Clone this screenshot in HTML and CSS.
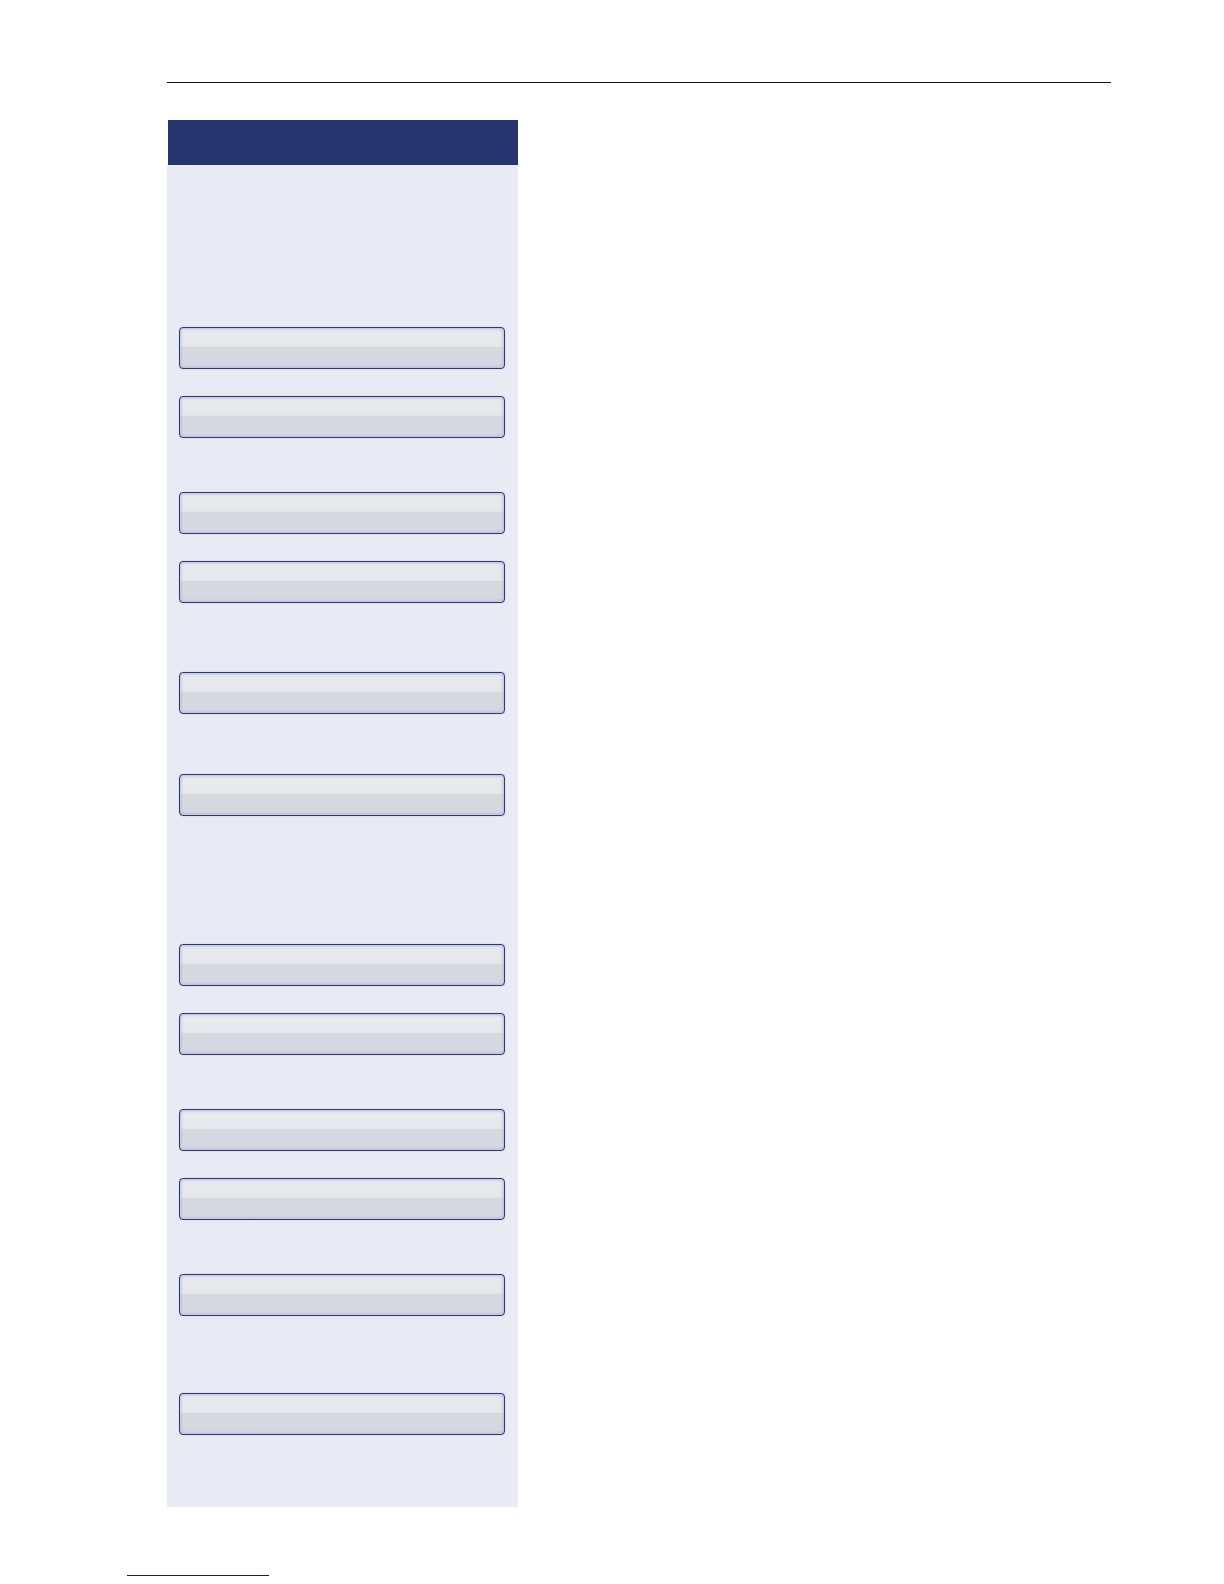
FILE: index.html
```html
<!DOCTYPE html>
<html lang="en">
<head>
    <meta charset="UTF-8">
    <meta name="viewport" content="width=device-width, initial-scale=1.0">
    <title>Menu</title>
    <link rel="stylesheet" href="styles.css">
</head>
<body>

    <div class="page">
        <hr class="page-rule">

        <!-- Side panel -->
        <aside class="panel">
            <div class="panel-header"></div>

            <div class="panel-body">
                <div class="group">
                    <button type="button" class="key" aria-label="Option 1"></button>
                    <button type="button" class="key" aria-label="Option 2"></button>
                </div>

                <div class="group">
                    <button type="button" class="key" aria-label="Option 3"></button>
                    <button type="button" class="key" aria-label="Option 4"></button>
                </div>

                <div class="group group-spaced">
                    <button type="button" class="key" aria-label="Option 5"></button>
                </div>

                <div class="group group-single">
                    <button type="button" class="key" aria-label="Option 6"></button>
                </div>

                <div class="group group-section">
                    <button type="button" class="key" aria-label="Option 7"></button>
                    <button type="button" class="key" aria-label="Option 8"></button>
                </div>

                <div class="group">
                    <button type="button" class="key" aria-label="Option 9"></button>
                    <button type="button" class="key" aria-label="Option 10"></button>
                </div>

                <div class="group">
                    <button type="button" class="key" aria-label="Option 11"></button>
                </div>

                <div class="group group-last">
                    <button type="button" class="key" aria-label="Option 12"></button>
                </div>
            </div>
        </aside>
    </div>

    <footer class="footer">
        <hr class="footer-rule">
    </footer>

</body>
</html>
```
FILE: styles.css
```css
body {
    font-family: "Liberation Sans", sans-serif;
    margin: 0;
    background-color: #ffffff;
}

.page {
    padding: 82px 113px 0 167px;
}

.page-rule {
    height: 1px;
    margin: 0 0 37px;
    border: none;
    background-color: #101018;
}

/* Side panel */
.panel {
    width: 351px;
    max-width: 100%;
}

.panel-header {
    height: 45px;
    margin-left: 1px;
    background-color: #27346e;
}

.panel-body {
    display: flex;
    flex-direction: column;
    padding: 162px 13px 72px 12px;
    background-color: #e8ebf4;
}

/* Button groups */
.group {
    display: flex;
    flex-direction: column;
    gap: 27px;
}

.group + .group {
    margin-top: 54px;
}

.group + .group-single {
    margin-top: 60px;
}

.group + .group-spaced {
    margin-top: 69px;
}

.group + .group-last {
    margin-top: 77px;
}

.group + .group-section {
    margin-top: 128px;
}

.key {
    width: 100%;
    height: 42px;
    padding: 0;
    border: 1px solid #333b6c;
    border-radius: 4px;
    background: linear-gradient(#e8eaef 0%, #e6e8eb 46%, #d6d9e0 47%, #d5d8e0 100%);
    box-shadow: inset 0 0 3px 1px #b4bce0, 0 0 1px #8c93b8;
    cursor: pointer;
}

.key:active {
    background: #d5d8e0;
}

/* Footer */
.footer {
    padding: 68px 127px 8px;
}

.footer-rule {
    width: 142px;
    height: 1px;
    margin: 0;
    border: none;
    background-color: #15157a;
}
```
